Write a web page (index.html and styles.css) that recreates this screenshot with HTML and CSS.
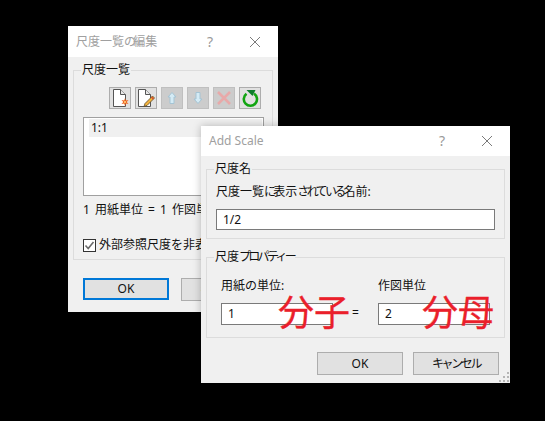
FILE: index.html
```html
<!DOCTYPE html>
<html lang="ja">
<head>
  <meta charset="UTF-8">
  <title>尺度一覧の編集</title>
  <link rel="stylesheet" href="styles.css">
</head>
<body>

<!-- 尺度一覧の編集 -->
<div class="window list-window">
  <div class="titlebar">
    <span class="title">尺度一覧<span class="kana">の</span>編集</span>
    <span class="help">?</span>
    <svg class="close" width="12" height="12" viewBox="0 0 12 12"><path d="M1 1L11 11M11 1L1 11" stroke="#7a7a7a" fill="none"/></svg>
  </div>
  <fieldset class="group list-group">
    <legend>尺度一覧</legend>
    <div class="toolbar">
      <div class="tool">
        <svg width="20" height="20" viewBox="0 0 20 20">
          <path d="M3.5 1.5H10.5L15.5 6.5V18.5H3.5Z" fill="#fff" stroke="#555"/>
          <path d="M10.5 1.5V6.5H15.5" fill="#e8e8e8" stroke="#555"/>
          <path d="M15 10L15.8 12.6L18.5 12L16.7 14L18.5 16L15.8 15.4L15 18L14.2 15.4L11.5 16L13.3 14L11.5 12L14.2 12.6Z" fill="#f2641c"/>
          <circle cx="15" cy="14" r="1.1" fill="#ffd27a"/>
        </svg>
      </div>
      <div class="tool">
        <svg width="20" height="20" viewBox="0 0 20 20">
          <path d="M2.5 1.5H9.5L14.5 6.5V18.5H2.5Z" fill="#fff" stroke="#555"/>
          <path d="M9.5 1.5V6.5H14.5" fill="#e8e8e8" stroke="#555"/>
          <path d="M16.5 8L18.5 10L11 17.5L8 18.5L9 15.5Z" fill="#f3b23c" stroke="#5a4a2a" stroke-width=".8"/>
          <path d="M15.5 9L17.5 11" stroke="#d9482b" stroke-width="1.5"/>
        </svg>
      </div>
      <div class="tool off">
        <svg width="20" height="20" viewBox="0 0 20 20"><path d="M10 4.5L14 9H12V15.5H8V9H6Z" fill="#d4ebf5" stroke="#a5c4d4"/></svg>
      </div>
      <div class="tool off">
        <svg width="20" height="20" viewBox="0 0 20 20"><path d="M10 15.5L14 11H12V4.5H8V11H6Z" fill="#d4ebf5" stroke="#a5c4d4"/></svg>
      </div>
      <div class="tool off">
        <svg width="20" height="20" viewBox="0 0 20 20"><path d="M4 4L16 16M16 4L4 16" stroke="#e8a9a9" stroke-width="2.6" fill="none"/></svg>
      </div>
      <div class="tool">
        <svg width="20" height="20" viewBox="0 0 20 20">
          <path d="M6.5 5.8A6.6 6.6 0 1 0 14 5.6" stroke="#12a512" stroke-width="2.6" fill="none"/>
          <path d="M6.5 2H15.5L12.5 8Z" fill="#0d7d2c"/>
        </svg>
      </div>
    </div>
    <div class="listbox"><div class="list-item">1:1</div></div>
    <div class="info">1 用紙単位 = 1 作図単位</div>
    <div class="check-row">
      <span class="checkbox">
        <svg width="11" height="11" viewBox="0 0 11 11"><path d="M1.5 5.5L4.2 8.5L9.5 2" stroke="#6a6a6a" stroke-width="1.6" fill="none"/></svg>
      </span>
      <span>外部参照尺度を非表示</span>
    </div>
  </fieldset>
  <div class="buttons list-buttons">
    <div class="btn default">OK</div>
    <div class="btn"><span class="kana-wide">キャンセル</span></div>
  </div>
</div>

<!-- Add Scale -->
<div class="window add-window">
  <div class="titlebar">
    <span class="title">Add Scale</span>
    <span class="help">?</span>
    <svg class="close" width="12" height="12" viewBox="0 0 12 12"><path d="M1 1L11 11M11 1L1 11" stroke="#7a7a7a" fill="none"/></svg>
  </div>
  <fieldset class="group name-group">
    <legend>尺度名</legend>
    <div class="label">尺度一覧<span class="kana">に</span>表示<span class="kana">されている</span>名前:</div>
    <div class="input name-input">1/2</div>
  </fieldset>
  <fieldset class="group prop-group">
    <legend>尺度<span class="kana">プロパティー</span></legend>
    <div class="units">
      <div class="label">用紙の単位:</div>
      <div></div>
      <div class="label">作図単位</div>
      <div class="input">1</div>
      <div class="equals">=</div>
      <div class="input">2</div>
    </div>
  </fieldset>
  <div class="buttons add-buttons">
    <div class="btn">OK</div>
    <div class="btn"><span class="kana-wide">キャンセル</span></div>
  </div>
  <svg class="grip" width="11" height="11" viewBox="0 0 11 11" fill="#b5b5b5">
    <rect x="8" y="0" width="2" height="2"/>
    <rect x="4" y="4" width="2" height="2"/><rect x="8" y="4" width="2" height="2"/>
    <rect x="0" y="8" width="2" height="2"/><rect x="4" y="8" width="2" height="2"/><rect x="8" y="8" width="2" height="2"/>
  </svg>
  <!-- 手書きの注釈 -->
  <div class="note note-left">分子</div>
  <div class="note note-right">分母</div>
</div>

</body>
</html>
```

FILE: styles.css
```css
html, body {
    margin: 0;
    height: 100%;
    overflow: hidden;
    background-color: #000;
}

body {
    font-family: "Noto Sans", "Noto Sans CJK JP", sans-serif;
    font-size: 12px;
    line-height: 16px;
    color: #111;
}

/* windows on the desktop */
.window {
    position: absolute;
    box-sizing: border-box;
    background-color: #f0f0f0;
    box-shadow: 0 0 8px rgba(0, 0, 0, 0.25);
}

.list-window {
    left: 68px;
    top: 26px;
    width: 210px;
    height: 286px;
}

.add-window {
    left: 201px;
    top: 126px;
    width: 309px;
    height: 257px;
}

.titlebar {
    display: flex;
    align-items: center;
    height: 30px;
    padding-left: 8px;
    background-color: #fff;
}

.list-window .titlebar {
    height: 31px;
}

.title {
    flex: 1;
    color: #a0a0a0;
}

.help {
    width: 12px;
    margin-right: 30px;
    font-size: 14px;
    color: #9a9a9a;
}

.close {
    margin-right: 17px;
}

/* Meiryo UI style narrow kana */
.kana {
    letter-spacing: -2.7px;
}

.kana-wide {
    letter-spacing: -2.4px;
}

/* group boxes */
.group {
    box-sizing: border-box;
    min-width: 0;
    margin: 5px 5px 0;
    padding: 0;
    border: 1px solid #dcdcdc;
}

.group legend {
    margin-left: -2px;
    padding: 0 1px;
    line-height: 16px;
}

.list-group {
    padding: 9px 0 6px 9px;
}

.name-group {
    padding: 7px 9px 8px;
}

.prop-group {
    margin-top: 10px;
    padding: 13px 14px 12px;
}

.prop-group legend {
    margin-left: -7px;
}

/* toolbar */
.toolbar {
    display: flex;
    gap: 4px;
    padding-left: 26px;
}

.tool {
    box-sizing: border-box;
    display: flex;
    align-items: center;
    justify-content: center;
    width: 22px;
    height: 22px;
    background-color: #e1e1e1;
    border: 1px solid #adadad;
}

.tool.off {
    background-color: #cccccc;
    border-color: #bfbfbf;
}

.listbox {
    box-sizing: border-box;
    width: 181px;
    height: 79px;
    margin-top: 8px;
    padding: 1px 1px 0 5px;
    background-color: #fff;
    border: 1px solid #a0a0a0;
}

.list-item {
    height: 18px;
    padding-left: 2px;
    line-height: 18px;
    background-color: #f0f0f0;
}

.info {
    margin-top: 6px;
    word-spacing: 2px;
    white-space: nowrap;
}

.check-row {
    display: flex;
    align-items: center;
    gap: 3px;
    margin-top: 19px;
    white-space: nowrap;
}

.checkbox {
    box-sizing: border-box;
    display: flex;
    align-items: center;
    justify-content: center;
    width: 13px;
    height: 13px;
    background-color: #fff;
    border: 1px solid #333;
}

/* buttons */
.buttons {
    display: flex;
    gap: 12px;
}

.list-buttons {
    margin: 18px 0 0 15px;
}

.add-buttons {
    justify-content: flex-end;
    gap: 10px;
    margin: 14px 11px 0 0;
}

.btn {
    box-sizing: border-box;
    width: 86px;
    height: 23px;
    line-height: 21px;
    text-align: center;
    white-space: nowrap;
    background-color: #e1e1e1;
    border: 1px solid #adadad;
}

.btn.default {
    height: 22px;
    line-height: 18px;
    border: 2px solid #0078d7;
}

/* inputs */
.label {
    white-space: nowrap;
}

.input {
    box-sizing: border-box;
    height: 22px;
    padding-left: 6px;
    line-height: 20px;
    background-color: #fff;
    border: 1px solid #7a7a7a;
}

.name-input {
    height: 21px;
    margin-top: 9px;
    line-height: 19px;
}

.units {
    display: grid;
    grid-template-columns: 112px 45px 112px;
    row-gap: 9px;
}

.equals {
    text-align: center;
    line-height: 20px;
}

.grip {
    position: absolute;
    right: 0;
    bottom: 0;
}

/* red notes written over the dialog */
.note {
    position: absolute;
    top: 169px;
    font-size: 36px;
    line-height: 36px;
    color: #ea1f2b;
    -webkit-text-stroke: 0.3px #ea1f2b;
    white-space: nowrap;
}

.note-left {
    left: 77px;
}

.note-right {
    left: 221px;
}
```
